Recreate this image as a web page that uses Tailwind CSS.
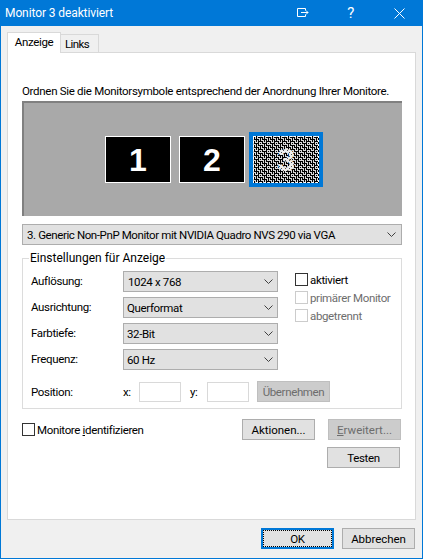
<!DOCTYPE html>
<html lang="de">
  <head>
    <meta charset="UTF-8" />
    <title>Monitor 3 deaktiviert</title>
    <script src="https://cdn.jsdelivr.net/npm/@tailwindcss/browser@4"></script>
  </head>
  <body class="bg-[#f0f0f0]">
    <div class="w-[423px] h-[559px] flex flex-col border border-[#0078d7] border-t-0 bg-[#f0f0f0] font-['Roboto',sans-serif] text-[11.5px] tracking-[-0.35px] leading-[16px] text-black overflow-hidden whitespace-nowrap">
      <!-- Title bar -->
      <div class="h-[26px] shrink-0 -mx-px bg-[#0078d7] text-white flex items-center pl-[5px]">
        <span class="flex-1 text-[12px] tracking-[-0.1px]">Monitor 3 deaktiviert</span>
        <svg width="12" height="10" viewBox="0 0 12 10" fill="none" stroke="white" class="mr-[38px]">
          <path d="M8.5 2.5V.5H.5v8h8V6.5M4 4.5h7M9 2.5l2 2-2 2" />
        </svg>
        <span class="mr-[40px] text-[15px]">?</span>
        <svg width="11" height="11" viewBox="0 0 11 11" fill="none" stroke="white" class="mr-[18px]">
          <path d="M.5.5l10 10M10.5.5l-10 10" />
        </svg>
      </div>

      <!-- Tabs -->
      <div class="flex pl-[6px] pt-[7px] h-[27px] shrink-0 relative">
        <div class="w-[54px] h-[21px] -mt-[1px] bg-white border border-b-0 border-[#d9d9d9] flex justify-center pt-[1px] z-10 relative">Anzeige</div>
        <div class="w-[38px] h-[19px] mt-[1px] bg-[#f0f0f0] border border-l-0 border-[#d9d9d9] pl-[4px] pt-[1px] tracking-[-0.6px]">Links</div>
      </div>

      <!-- Tab page -->
      <div class="mx-[6px] -mt-[1px] h-[468px] bg-white border border-[#d9d9d9] px-[14px] shrink-0">
        <p class="mt-[30px] h-[16px] tracking-[-0.3px]">Ordnen Sie die Monitorsymbole entsprechend der Anordnung Ihrer Monitore.</p>

        <!-- Monitor arrangement -->
        <div class="mt-[2px] w-[380px] h-[115px] bg-[#a9a9a9] border-t-2 border-l-2 border-[#808080] flex items-center pl-[81px]">
          <div class="w-[66px] h-[47px] bg-black border border-white text-white flex items-center justify-center font-['Liberation_Sans',sans-serif] font-bold text-[32px] tracking-normal">1</div>
          <div class="ml-[8px] w-[66px] h-[47px] bg-black border border-white text-white flex items-center justify-center font-['Liberation_Sans',sans-serif] font-bold text-[32px] tracking-normal">2</div>
          <div class="ml-[4px] border-[4px] border-[#0078d7]">
            <svg width="66" height="47" class="block" shape-rendering="crispEdges">
              <defs>
                <pattern id="dither" width="8" height="8" patternUnits="userSpaceOnUse">
                  <rect width="8" height="8" fill="#000" />
                  <path d="M0 .5h3M6 .5h2M4 2.5h3M0 4.5h3M2 6.5h3M6 6.5h2M2.5 0v3M2.5 4v3M4.5 0v3M4.5 4v3M.5 2v3M.5 6v2M6.5 2v3M6.5 6v2" stroke="#d8d8d8" fill="none" />
                </pattern>
                <pattern id="digit" width="4" height="4" patternUnits="userSpaceOnUse">
                  <rect width="4" height="4" fill="#eee" />
                  <rect width="1" height="1" fill="#555" />
                  <rect x="2" y="2" width="1" height="1" fill="#555" />
                </pattern>
              </defs>
              <rect width="66" height="47" fill="url(#dither)" />
              <rect x=".5" y=".5" width="65" height="46" fill="none" stroke="#fff" stroke-dasharray="2 2" />
              <text x="33" y="35" text-anchor="middle" fill="url(#digit)" font-family="Liberation Sans" font-weight="700" font-size="32">3</text>
            </svg>
          </div>
        </div>

        <!-- Monitor select -->
        <div class="mt-[8px] w-[380px] h-[21px] bg-[#e1e1e1] border border-[#adadad] flex items-center pl-[4px] pr-[5px] justify-between">
          <span class="tracking-[-0.4px]">3. Generic Non-PnP Monitor mit NVIDIA Quadro NVS 290 via VGA</span>
          <svg width="9" height="5" viewBox="0 0 9 5" fill="none" stroke="#404040"><path d="M.5.5l4 4 4-4" /></svg>
        </div>

        <!-- Settings group -->
        <div class="mt-[13px] w-[380px] h-[151px] border border-[#dcdcdc] relative pl-[8px] pt-[12px]">
          <span class="absolute -top-[9px] left-[6px] bg-white px-[1px] text-[12px] tracking-normal">Einstellungen für Anzeige</span>
          <div class="flex">
            <div class="w-[92px] shrink-0 flex flex-col gap-[6px]">
              <div class="h-[20px] flex items-center">Auflösung:</div>
              <div class="h-[20px] flex items-center">Ausrichtung:</div>
              <div class="h-[20px] flex items-center">Farbtiefe:</div>
              <div class="h-[20px] flex items-center">Frequenz:</div>
            </div>
            <div class="w-[155px] shrink-0 flex flex-col gap-[5px]">
              <div class="h-[21px] bg-[#e1e1e1] border border-[#adadad] flex items-center pl-[4px] pr-[4px] justify-between">
                <span>1024 x 768</span>
                <svg width="9" height="5" viewBox="0 0 9 5" fill="none" stroke="#404040"><path d="M.5.5l4 4 4-4" /></svg>
              </div>
              <div class="h-[21px] bg-[#e1e1e1] border border-[#adadad] flex items-center pl-[3px] pr-[4px] justify-between">
                <span>Querformat</span>
                <svg width="9" height="5" viewBox="0 0 9 5" fill="none" stroke="#404040"><path d="M.5.5l4 4 4-4" /></svg>
              </div>
              <div class="h-[21px] bg-[#e1e1e1] border border-[#adadad] flex items-center pl-[3px] pr-[4px] justify-between">
                <span>32-Bit</span>
                <svg width="9" height="5" viewBox="0 0 9 5" fill="none" stroke="#404040"><path d="M.5.5l4 4 4-4" /></svg>
              </div>
              <div class="h-[21px] bg-[#e1e1e1] border border-[#adadad] flex items-center pl-[3px] pr-[4px] justify-between">
                <span>60 Hz</span>
                <svg width="9" height="5" viewBox="0 0 9 5" fill="none" stroke="#404040"><path d="M.5.5l4 4 4-4" /></svg>
              </div>
            </div>
            <div class="ml-[17px] shrink-0 flex flex-col gap-[5px] mt-[2px]">
              <div class="h-[13px] flex items-center gap-[2px]"><span class="w-[13px] h-[13px] border border-[#333]"></span>aktiviert</div>
              <div class="h-[13px] flex items-center gap-[2px] text-[#6d6d6d]"><span class="w-[13px] h-[13px] border border-[#cccccc]"></span>primärer Monitor</div>
              <div class="h-[13px] flex items-center gap-[2px] text-[#6d6d6d]"><span class="w-[13px] h-[13px] border border-[#cccccc]"></span>abgetrennt</div>
            </div>
          </div>
          <div class="mt-[11px] flex items-center h-[21px]">
            <span class="w-[92px]">Position:</span>
            <span class="w-[16px]">x:</span>
            <span class="w-[42px] h-[20px] border border-[#d9d9d9]"></span>
            <span class="ml-[9px] w-[17px]">y:</span>
            <span class="w-[42px] h-[20px] border border-[#d9d9d9]"></span>
            <span class="ml-[8px] w-[73px] h-[21px] bg-[#cccccc] border border-[#bfbfbf] text-[#6d6d6d] flex items-center justify-center">Übernehmen</span>
          </div>
        </div>

        <!-- Actions -->
        <div class="mt-[10px] w-[379px] flex items-center h-[21px]">
          <span class="w-[13px] h-[13px] border border-[#333]"></span>
          <span class="ml-[2px] flex-1 pt-[1px]">Monitore <span class="underline">i</span>dentifizieren</span>
          <span class="w-[73px] h-[21px] bg-[#e1e1e1] border border-[#adadad] flex items-center justify-center pt-[1px] tracking-[-0.05px]">Aktionen...</span>
          <span class="ml-[13px] w-[73px] h-[21px] bg-[#cccccc] border border-[#bfbfbf] text-[#6d6d6d] flex items-center justify-center pt-[1px] tracking-normal"><span class="underline">E</span>rweitert...</span>
        </div>
        <div class="mt-[7px] w-[378px] flex justify-end">
          <span class="w-[73px] h-[21px] bg-[#e1e1e1] border border-[#adadad] flex items-center justify-center">Testen</span>
        </div>
      </div>

      <!-- Dialog buttons -->
      <div class="flex justify-end pr-[7px] mt-[8px] gap-[8px]">
        <span class="w-[73px] h-[21px] bg-[#e1e1e1] border-2 border-[#0078d7] flex items-center justify-center outline-1 outline-dotted -outline-offset-3 outline-black">OK</span>
        <span class="w-[73px] h-[21px] bg-[#e1e1e1] border border-[#adadad] flex items-center justify-center tracking-[-0.05px]">Abbrechen</span>
      </div>
    </div>
  </body>
</html>
